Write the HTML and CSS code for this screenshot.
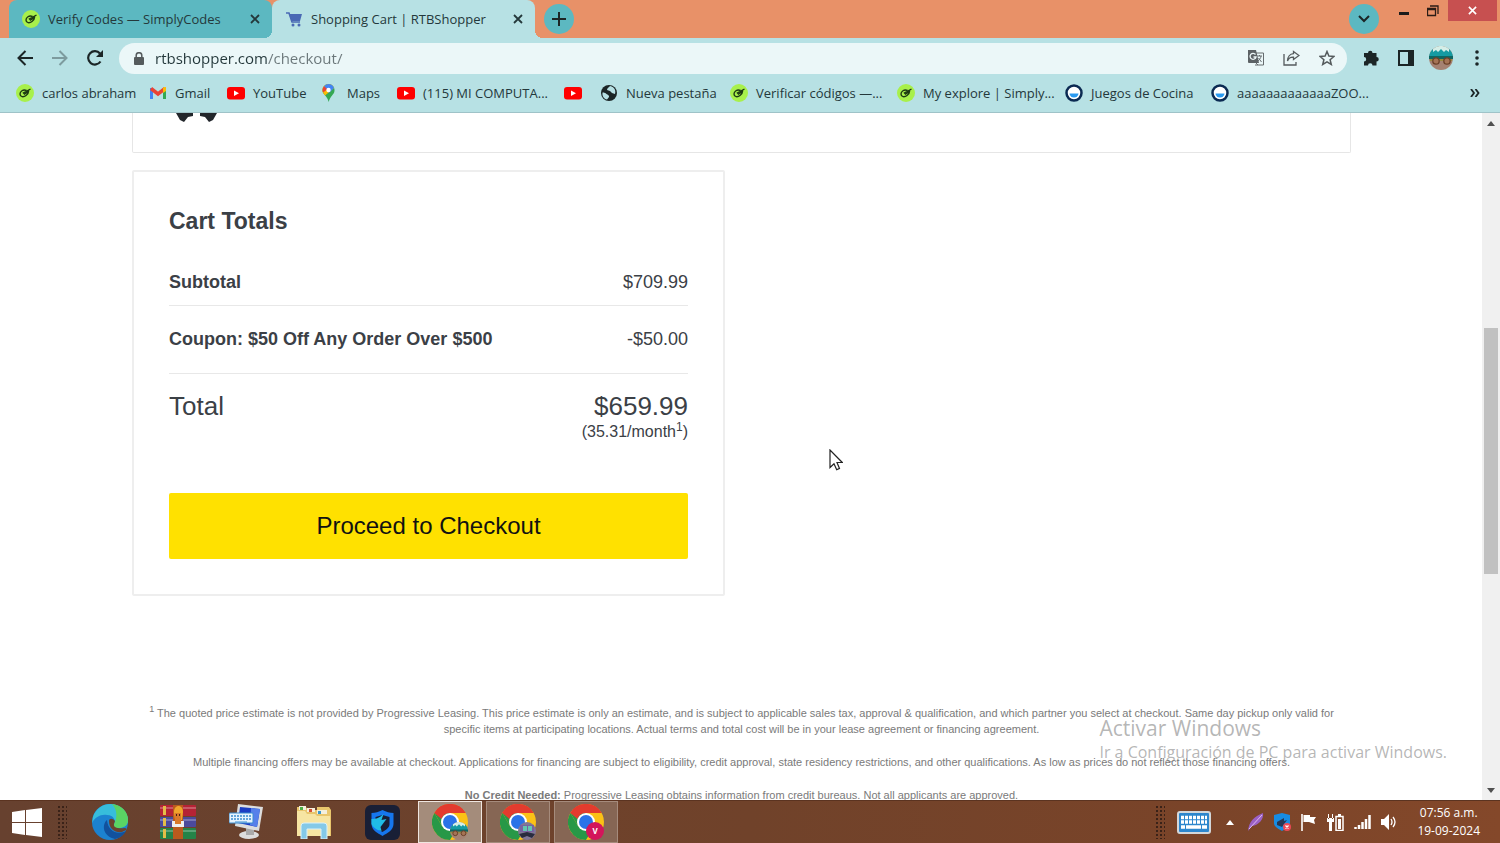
FILE: index.html
```
<!DOCTYPE html>
<html lang="en">
<head>
    <meta charset="UTF-8">
    <meta name="viewport" content="width=device-width, initial-scale=1.0">
    <title>Shopping Cart | RTBShopper</title>
    <link rel="stylesheet" href="styles.css">
</head>
<body>
    <!-- Shared icons -->
    <svg class="sprite" aria-hidden="true">
        <symbol id="simply" viewBox="0 0 18 18">
            <circle cx="9" cy="9" r="9" fill="#a8f04b"/>
            <path d="M10.500 6.500C7 5 4 7.500 4 10c0 3 3.500 3.500 6 1.500 2-1.500 2.500-3 2.500-4L8.500 10 7.500 9l7-4" fill="none" stroke="#1d3a12" stroke-width="1.400"/>
        </symbol>
        <symbol id="youtube" viewBox="0 0 18 18">
            <rect y="3" width="18" height="12.500" rx="3" fill="#f00"/>
            <path d="M7 6.500v5.500l5-2.750z" fill="#fff"/>
        </symbol>
        <symbol id="ball" viewBox="0 0 18 18">
            <circle cx="9" cy="9" r="7.500" fill="#fff" stroke="#0b2a52" stroke-width="2.500"/>
            <path d="M4.500 9.500h9a4.500 4 0 0 1-9 0z" fill="#2a9af0"/>
        </symbol>
        <symbol id="close" viewBox="0 0 10 10">
            <path d="M1 1l8 8M9 1L1 9" stroke="currentColor" stroke-width="1.800"/>
        </symbol>
        <symbol id="chrome" viewBox="0 0 36 36">
            <circle cx="18" cy="18" r="18" fill="#fbc116"/>
            <path d="M18 18L2.400 9A18 18 0 0 1 33.600 9H18z" fill="#e33b2e"/>
            <path d="M2.400 9A18 18 0 0 0 18 36l8-13.500-8-4.500L10.200 22.500z" fill="#279847"/>
            <path d="M2.400 9L10.200 22.500 18 18V9z" fill="#279847"/>
            <path d="M2.400 9A18 18 0 0 1 33.600 9H18a9 9 0 0 0-8.500 6z" fill="#e33b2e"/>
            <circle cx="18" cy="18" r="9" fill="#fff"/>
            <circle cx="18" cy="18" r="7" fill="#2a73e8"/>
        </symbol>
        <symbol id="truck" viewBox="0 0 24 24">
            <circle cx="12" cy="12" r="12" fill="#a58272"/>
            <path d="M0 12A12 12 0 0 1 4 3h16a12 12 0 0 1 4 9z" fill="#159ba2"/>
            <path d="M4 3a12 12 0 0 1 16 0v3l-3-2-2 2-3-3-3 3-2-2-3 2z" fill="#d5eee8"/>
            <path d="M0 10h24v3H0z" fill="#0f6663"/>
            <path d="M1 13h22v2H1z" fill="#9a8a3d"/>
            <circle cx="7" cy="15" r="3.200" fill="#a57455" stroke="#6b4029" stroke-width="1.300"/>
            <circle cx="18" cy="15" r="3.200" fill="#a57455" stroke="#6b4029" stroke-width="1.300"/>
        </symbol>
    </svg>

    <header class="browser">
        <div class="tabstrip">
            <div class="tab">
                <svg class="favicon"><use href="#simply"/></svg>
                <span class="tab-title">Verify Codes — SimplyCodes</span>
                <button class="tab-close" aria-label="Close tab"><svg><use href="#close"/></svg></button>
            </div>
            <div class="tab active">
                <svg class="favicon" viewBox="0 0 18 18">
                    <path d="M1 3h3l3 9h8" fill="none" stroke="#4a69b4" stroke-width="1.600"/>
                    <path d="M4 4h13l-2 7H6.500z" fill="#4a69b4"/>
                    <circle cx="8" cy="15" r="1.500" fill="#4a69b4"/><circle cx="14" cy="15" r="1.500" fill="#4a69b4"/>
                </svg>
                <span class="tab-title">Shopping Cart | RTBShopper</span>
                <button class="tab-close" aria-label="Close tab"><svg><use href="#close"/></svg></button>
            </div>
            <button class="round-btn new-tab" aria-label="New tab">
                <svg width="14" height="14" viewBox="0 0 14 14"><path d="M7 0v14M0 7h14" stroke="#1b2526" stroke-width="2"/></svg>
            </button>
            <div class="window-controls">
                <button class="round-btn" aria-label="Search tabs">
                    <svg width="12" height="8" viewBox="0 0 12 8"><path d="M1 1l5 5 5-5" fill="none" stroke="#1b2526" stroke-width="2"/></svg>
                </button>
                <button class="win-btn minimize" aria-label="Minimize">
                    <svg width="10" height="3"><path d="M0 1.500h10" stroke="#1b1b1b" stroke-width="3"/></svg>
                </button>
                <button class="win-btn restore" aria-label="Restore">
                    <svg width="12" height="12" viewBox="0 0 12 12"><path d="M.5 3.500h8v7h-8zM3 1h8v8M.5 4.500h8" fill="none" stroke="#2b1d16" stroke-width="1.300"/></svg>
                </button>
                <button class="win-btn win-close" aria-label="Close window"><svg><use href="#close"/></svg></button>
            </div>
        </div>

        <div class="toolbar">
            <button class="nav-btn" aria-label="Back">
                <svg width="16" height="16" viewBox="0 0 16 16"><path d="M16 8H2M8.500 1L1.500 8l7 7" fill="none" stroke="#1b2526" stroke-width="2"/></svg>
            </button>
            <button class="nav-btn" aria-label="Forward">
                <svg width="16" height="16" viewBox="0 0 16 16"><path d="M0 8h14M7.500 1l7 7-7 7" fill="none" stroke="#7d9b9e" stroke-width="2"/></svg>
            </button>
            <button class="nav-btn" aria-label="Reload">
                <svg width="16" height="16" viewBox="0 0 16 16"><path d="M13.500 11.500A6.700 6.700 0 1 1 13 3.500" fill="none" stroke="#1b2526" stroke-width="2.200"/><path d="M16 0v7H9z" fill="#1b2526"/></svg>
            </button>
            <div class="address">
                <svg width="10" height="13" viewBox="0 0 10 13"><rect y="5" width="10" height="8" rx="1" fill="#555b5d"/><path d="M2.200 6V3.500a2.800 2.800 0 0 1 5.600 0V6" fill="none" stroke="#555b5d" stroke-width="1.500"/></svg>
                <input type="text" class="url" aria-label="Address" value="rtbshopper.com/checkout/">
                <button aria-label="Translate">
                    <svg width="16" height="16" viewBox="0 0 16 16"><path d="M6 3h9.500v12H7" fill="none" stroke="#666c6f" /><path d="M0 0h8l3 13H1a1 1 0 0 1-1-1z" fill="#5c6265"/><path d="M7.500 4.500A3 3 0 1 0 8 7H5.500" fill="none" stroke="#eef8f9" stroke-width="1.300"/><path d="M9 6h5M11.500 5v1M13 6c0 2-2 4-3 5M10.500 8l3 4M8 13l2 2" fill="none" stroke="#666c6f"/></svg>
                </button>
                <button aria-label="Share">
                    <svg width="17" height="16" viewBox="0 0 17 16"><path d="M1 4v11h12v-3" fill="none" stroke="#555b5d" stroke-width="1.300"/><path d="M10.500 1.500l5.500 4-5.500 4V7.200C7.500 7 5.500 8.500 4.500 11c0-4 2.500-7 6-7.300z" fill="none" stroke="#555b5d" stroke-width="1.300"/></svg>
                </button>
                <button aria-label="Bookmark">
                    <svg width="16" height="16" viewBox="0 0 16 16"><path d="M8 1.500l1.900 4.600 5 .4-3.800 3.200 1.200 4.800L8 11.900l-4.300 2.600 1.200-4.800L1.100 6.500l5-.4z" fill="none" stroke="#555b5d" stroke-width="1.500"/></svg>
                </button>
            </div>
            <div class="tools">
                <button aria-label="Extensions">
                    <svg width="16" height="16" viewBox="0 0 16 16"><path d="M1 3h4a2 2 0 0 1 4.500 0h4v4a2.200 2.200 0 0 1 0 4.500v4h-4a2.200 2.200 0 0 0-4.500 0H1v-4a2.200 2.200 0 0 0 0-4.400z" fill="#1b2526"/></svg>
                </button>
                <button aria-label="Side panel">
                    <svg width="16" height="16" viewBox="0 0 16 16"><path d="M0 0h16v16H0zM2 2v12h8V2z" fill="#1b2526" fill-rule="evenodd"/></svg>
                </button>
                <button aria-label="Profile"><svg width="24" height="24"><use href="#truck"/></svg></button>
                <button aria-label="Menu">
                    <svg width="4" height="16" viewBox="0 0 4 16"><circle cx="2" cy="2" r="1.800" fill="#1b2526"/><circle cx="2" cy="8" r="1.800" fill="#1b2526"/><circle cx="2" cy="14" r="1.800" fill="#1b2526"/></svg>
                </button>
            </div>
        </div>

        <nav class="bookmarks">
            <a href="#"><svg class="favicon"><use href="#simply"/></svg>carlos abraham</a>
            <a href="#">
                <svg class="favicon" viewBox="0 0 18 18"><path d="M2.500 15V4" stroke="#4285f4" stroke-width="3"/><path d="M15.500 15V4" stroke="#34a853" stroke-width="3"/><path d="M2 4.500l7 5.500 7-5.500" fill="none" stroke="#ea4335" stroke-width="3.500"/><path d="M14 3.500l3-.5v4l-3 2z" fill="#fbbc04"/></svg>Gmail
            </a>
            <a href="#"><svg class="favicon"><use href="#youtube"/></svg>YouTube</a>
            <a href="#">
                <svg class="favicon" viewBox="0 0 18 18"><path d="M7.500 0A6 6 0 0 1 13.500 6.500C13.500 10.500 9 12 7.700 18 6.500 12 1.500 10.500 1.500 6.500A6 6 0 0 1 7.500 0z" fill="#34a853"/><path d="M7.500 0A6 6 0 0 1 13 4L4 11.500C2.500 9.500 1.500 8 1.500 6.500A6 6 0 0 1 7.500 0z" fill="#fbbc04"/><path d="M7.500 0A6 6 0 0 1 13 4L8 9 3 2.200A6 6 0 0 1 7.500 0z" fill="#4285f4"/><path d="M3 2.200l3.500 3L2 8.500C1.200 6 1.500 4 3 2.200z" fill="#ea4335"/><circle cx="7.500" cy="6" r="2.200" fill="#fff"/></svg>Maps
            </a>
            <a href="#"><svg class="favicon"><use href="#youtube"/></svg>(115) MI COMPUTA...</a>
            <a href="#" aria-label="YouTube"><svg class="favicon"><use href="#youtube"/></svg></a>
            <a href="#">
                <svg class="favicon" viewBox="0 0 18 18"><circle cx="9" cy="9" r="8" fill="#1b2526"/><path d="M2.500 8.500c2 0 3 .5 4 1.500s3 1 2.500 3l-2 2.500C4 15 2 12.500 2.500 8.500zM10 2c-1 1.500-3 2-3 4l3 1 2 2 3 1c1-3 0-7-5-8z" fill="#b7e1e4"/></svg>Nueva pestaña
            </a>
            <a href="#"><svg class="favicon"><use href="#simply"/></svg>Verificar códigos —...</a>
            <a href="#"><svg class="favicon"><use href="#simply"/></svg>My explore | Simply...</a>
            <a href="#"><svg class="favicon"><use href="#ball"/></svg>Juegos de Cocina</a>
            <a href="#"><svg class="favicon"><use href="#ball"/></svg>aaaaaaaaaaaaaZOO...</a>
            <button class="more" aria-label="More bookmarks">
                <svg width="10" height="8" viewBox="0 0 10 8"><path d="M1 0l3 4-3 4M5.500 0l3 4-3 4" fill="none" stroke="#1b2526" stroke-width="1.800"/></svg>
            </button>
        </nav>
    </header>

    <div class="viewport">
        <main class="page">
            <section class="cart-items">
                <svg width="44" height="10" viewBox="0 0 44 10"><path d="M1 0h17v3l-5 1-4 5-4-2zM42 0H25v3l5 1 4 5 4-2z" fill="#22262b"/></svg>
            </section>

            <section class="cart-totals">
                <h2>Cart Totals</h2>
                <table>
                    <tr class="subtotal">
                        <th>Subtotal</th>
                        <td>$709.99</td>
                    </tr>
                    <tr class="coupon">
                        <th><strong>Coupon:</strong> $50 Off Any Order Over $500</th>
                        <td>-$50.00</td>
                    </tr>
                    <tr class="total">
                        <th>Total</th>
                        <td>$659.99<small>(35.31/month<sup>1</sup>)</small></td>
                    </tr>
                </table>
                <button class="checkout">Proceed to Checkout</button>
            </section>

            <footer class="legal">
                <p><sup>1</sup> The quoted price estimate is not provided by Progressive Leasing. This price estimate is only an estimate, and is subject to applicable sales tax, approval &amp; qualification, and which partner you select at checkout. Same day pickup only valid for specific items at participating locations. Actual terms and total cost will be in your lease agreement or financing agreement.</p>
                <p>Multiple financing offers may be available at checkout. Applications for financing are subject to eligibility, credit approval, state residency restrictions, and other qualifications. As low as prices do not reflect those financing offers.</p>
                <p><b>No Credit Needed:</b> Progressive Leasing obtains information from credit bureaus. Not all applicants are approved.</p>
            </footer>
        </main>

        <div class="scrollbar">
            <svg width="8" height="5"><path d="M0 5l4-5 4 5z" fill="#505050"/></svg>
            <div class="thumb"></div>
            <svg width="8" height="5"><path d="M0 0h8L4 5z" fill="#505050"/></svg>
        </div>

        <div class="watermark">
            <div class="watermark-title">Activar Windows</div>
            <div>Ir a Configuración de PC para activar Windows.</div>
        </div>
        <svg class="cursor" width="14" height="22" viewBox="0 0 14 22"><path d="M1 1v17.500l4-3.800 2.700 6 2.800-1.300L8 13.500h5.300z" fill="#fff" stroke="#222" stroke-width="1.200"/></svg>
    </div>

    <footer class="taskbar">
        <button class="start" aria-label="Start">
            <svg width="30" height="29" viewBox="0 0 30 29"><path d="M0 4l13-2v12H0zM14 2l16-2v14H14zM0 15h13v12L0 25zM14 15h16v14l-16-2z" fill="#fff"/></svg>
        </button>
        <span class="grip"></span>
        <div class="apps">
            <button aria-label="Edge">
                <svg width="36" height="36" viewBox="0 0 36 36"><circle cx="18" cy="18" r="18" fill="#1c82d0"/><path d="M1 13C4 4 11 0 18 0c11 0 18 8 18 16 0 6-5 8-10 8-4 0-5-2-4-4 2-3 0-9-7-9C9 10 3 13 0 19z" fill="#37bddb"/><path d="M20 0c10 1 16 8 16 16 0 6-5 8-10 8-4 0-5-2-4-4 3-5 4-14-2-20z" fill="#5ad364"/><path d="M15 16c-5 4-5 16 8 19 5-1 9-4 11-8-8 4-18 1-19-11z" fill="#12519d"/><path d="M17 17c0 8 6 12 13 11l4-2c1-1 0-2-1-2-6 1-12 0-11-4l1-3c-2-3-6-3-6 0z" fill="#6b422d"/></svg>
            </button>
            <button aria-label="WinRAR">
                <svg width="36" height="34" viewBox="0 0 36 34"><rect width="36" height="11" rx="1" fill="#b52335"/><rect y="12" width="36" height="10" rx="1" fill="#4b4a9c"/><rect y="23" width="36" height="11" rx="1" fill="#258348"/><path d="M0 3h36M0 15h36M0 26h36" stroke="#fff" stroke-opacity=".25" stroke-width="2"/><path d="M4.500 1v9M4.500 13v8M4.500 24v9" stroke="#e4bd48" stroke-width="3"/><path d="M13 0h10v34H13z" fill="#ba5a1e"/><path d="M14 7c0-8 9-8 9 0l-1 8h-7z" fill="#f0a52c"/><path d="M12 16h12v6H12z" fill="#eee"/><path d="M15 8h6v11h-6z" fill="#d9792a"/><path d="M16 10h1M19 10h1" stroke="#4b2413" stroke-width="2"/></svg>
            </button>
            <button aria-label="Remote keyboard">
                <svg width="34" height="36" viewBox="0 0 34 36"><ellipse cx="20" cy="31" rx="10" ry="4" fill="#ddd"/><path d="M17 24h8v7h-8z" fill="#aaa"/><path d="M9 0l25 3-4 24L6 22z" fill="#ddd"/><path d="M11 3l20 2-3 18L9 19z" fill="#1b3dc4"/><path d="M22 4l9 1-3 18-7-2z" fill="#5780ea"/><rect y="9" width="24" height="10" rx="1" fill="#e6f3fd" stroke="#3a8ccf"/><path d="M2 12h20M2 15h20" stroke="#3a8ccf" stroke-width="1.500" stroke-dasharray="2 1"/><path d="M6 18h12" stroke="#3a8ccf"/></svg>
            </button>
            <button aria-label="File Explorer">
                <svg width="36" height="34" viewBox="0 0 36 34"><path d="M1 2h9l2 3h9V2h12l2 3v26H1z" fill="#e9c66c"/><path d="M3 1h7v4H3z" fill="#f4efdc"/><path d="M4 2h3v3H4z" fill="#4daf46"/><path d="M11 3h8v4h-8z" fill="#f4efdc"/><path d="M13 4h3v3h-3z" fill="#d65335"/><path d="M21 5h10v4H21z" fill="#f4efdc"/><path d="M22 6h3v3h-3z" fill="#3b98cb"/><path d="M1 6h8l2 3h8l2 2h13v20H1z" fill="#f7e5a2"/><path d="M5 34V21q0-3 3-3h20q3 0 3 3v13h-6V24H11v10z" fill="#84c9e8" stroke="#d8f1fb"/></svg>
            </button>
            <button aria-label="Antivirus">
                <svg width="35" height="35" viewBox="0 0 35 35"><rect width="35" height="35" rx="6" fill="#191f36"/><path d="M17.500 5c4 2 7 3 11 3v11c0 6-6 9-11 12-5-3-11-6-11-12V8c4 0 7-1 11-3z" fill="#1676ee"/><path d="M17.500 10l7 2v7c0 4-4 6-7 8-3-2-7-4-7-8v-7z" fill="#191f36"/><path d="M6.500 14c5 0 8-1 12-5l-2 6 5-1-6 8 1 4c-5-1-9-4-10-7z" fill="#20bde6"/></svg>
            </button>
            <button class="window current" aria-label="Chrome">
                <svg width="36" height="36" viewBox="0 0 36 36"><use href="#chrome"/><use href="#truck" x="18" y="18" width="18" height="18"/></svg>
            </button>
            <button class="window" aria-label="Chrome, second profile">
                <svg width="36" height="36" viewBox="0 0 36 36"><use href="#chrome"/><circle cx="27" cy="27" r="9" fill="#817795"/><path d="M20 21h14v7H20z" fill="#7962a0"/><path d="M23 22h4v5h-4zM28 22h4v5h-4z" fill="#64c6b1"/><path d="M19 30l8-2 8 2-3 4-5-2-5 2z" fill="#292b3e"/></svg>
            </button>
            <button class="window" aria-label="Chrome, third profile">
                <svg width="36" height="36" viewBox="0 0 36 36"><use href="#chrome"/><circle cx="27" cy="27" r="9" fill="#d3155b"/><text x="27" y="30" text-anchor="middle" class="initial">V</text></svg>
            </button>
        </div>

        <div class="tray">
            <span class="grip"></span>
            <button aria-label="Touch keyboard">
                <svg width="34" height="23" viewBox="0 0 34 23"><rect x="1" y="1" width="32" height="21" rx="2" fill="#2d86cc" stroke="#d3d7da" stroke-width="2"/><path d="M4 6.500h26M4 11h26" stroke="#fff" stroke-width="3.500" stroke-dasharray="3 1"/><path d="M4 16h4M9 16h15M25 16h5" stroke="#fff" stroke-width="3.500"/></svg>
            </button>
            <button aria-label="Show hidden icons"><svg width="8" height="5"><path d="M0 5l4-5 4 5z" fill="#fff"/></svg></button>
            <button aria-label="Feather"><svg width="16" height="18" viewBox="0 0 16 18"><path d="M0 18C1 8 6 4 15 0c1 6-4 12-11 13z" fill="#9b60c5"/><path d="M1 16L14 2" stroke="#dfbdf0"/></svg></button>
            <button aria-label="Security"><svg width="17" height="18" viewBox="0 0 17 18"><path d="M8 0l8 2v8c0 4-5 6-8 8-3-2-8-4-8-8V2z" fill="#178ce3"/><path d="M3 9l7-4v3l3-1-5 7-5-2z" fill="#253856"/><circle cx="13" cy="14" r="4" fill="#ed4956"/><path d="M11.500 12.500l3 3M14.500 12.500l-3 3" stroke="#fff" stroke-width="1.200"/></svg></button>
            <button aria-label="Action center"><svg width="16" height="17" viewBox="0 0 16 17"><path d="M1 0v17" stroke="#fff" stroke-width="1.600"/><path d="M2.500 1H9v2h6l-2 3 1 4-6-2H2.500z" fill="#fff"/></svg></button>
            <button aria-label="Battery"><svg width="17" height="17" viewBox="0 0 17 17"><rect x="9" y="2.500" width="7" height="14" fill="none" stroke="#fff" stroke-width="1.500"/><path d="M11 0h3v2h-3zM11 5h3v10h-3z" fill="#fff"/><path d="M1 0v5h1V0zM5 0v5h1V0zM0 4h7v4H5v9H2V8H0z" fill="#fff"/></svg></button>
            <button aria-label="Network"><svg width="17" height="14" viewBox="0 0 17 14"><path d="M1.500 14v-2M5 14v-4M8.500 14V7M12 14V4M15.500 14V0" stroke="#fff" stroke-width="2.500"/></svg></button>
            <button aria-label="Volume"><svg width="16" height="16" viewBox="0 0 16 16"><path d="M0 5h3l5-5v16l-5-5H0z" fill="#fff"/><path d="M10 5q2 3 0 6M12 3q4 5 0 10" fill="none" stroke="#fff" stroke-width="1.300"/></svg></button>
            <div class="clock">
                <div>07:56 a.m.</div>
                <div>19-09-2024</div>
            </div>
        </div>
    </footer>
</body>
</html>
```
FILE: styles.css
```
* {
    box-sizing: border-box;
}

body {
    margin: 0;
    height: 100vh;
    display: flex;
    flex-direction: column;
    overflow: hidden;
    font-family: "Open Sans", "Noto Sans", sans-serif;
    font-size: 13px;
    color: #24383b;
    background: #fff;
}

button {
    display: flex;
    align-items: center;
    justify-content: center;
    padding: 0;
    border: none;
    background: none;
    font: inherit;
    color: inherit;
    cursor: pointer;
}

.sprite {
    display: none;
}

.favicon {
    width: 18px;
    height: 18px;
    flex: none;
}

/* Browser chrome */
.browser {
    flex: none;
    background: #b7e1e4;
    border-bottom: 1px solid #9fc3c8;
}

.tabstrip {
    display: flex;
    height: 38px;
    padding-left: 9px;
    background: #e89168;
}

.tab {
    display: flex;
    align-items: center;
    width: 263px;
    padding: 0 11px 0 13px;
    background: #5cb8c1;
    border-radius: 8px 8px 0 0;
}

.tab.active {
    position: relative;
    background: #b7e1e4;
}

.tab.active::before,
.tab.active::after {
    content: "";
    position: absolute;
    bottom: 0;
    width: 8px;
    height: 8px;
}

.tab.active::before {
    right: 100%;
    background: radial-gradient(circle at 0 0, transparent 8px, #b7e1e4 8px);
}

.tab.active::after {
    left: 100%;
    background: radial-gradient(circle at 100% 0, transparent 8px, #b7e1e4 8px);
}

.tab-title {
    flex: 1;
    margin-left: 8px;
    white-space: nowrap;
}

.tab-close {
    width: 12px;
    height: 20px;
}

.tab-close svg {
    width: 10px;
    height: 10px;
}

.round-btn {
    width: 30px;
    height: 30px;
    border-radius: 50%;
    background: #5cb8c1;
}

.new-tab {
    margin: 4px 0 0 9px;
}

.window-controls {
    display: flex;
    align-items: flex-start;
    margin-left: auto;
    padding-right: 3px;
}

.window-controls .round-btn {
    margin: 4px 10px 0 0;
}

.win-btn {
    width: 29px;
    height: 21px;
}

.minimize {
    align-items: flex-end;
    padding-bottom: 6px;
}

.restore {
    margin-right: 1px;
}

.win-close {
    width: 49px;
    background: #c75050;
    color: #fff;
}

.win-close svg {
    width: 9px;
    height: 9px;
}

.toolbar {
    display: flex;
    align-items: center;
    height: 40px;
    padding: 0 21px 0 17px;
}

.nav-btn {
    width: 16px;
    height: 30px;
    margin-right: 19px;
}

.address {
    flex: 1;
    display: flex;
    align-items: center;
    gap: 19px;
    height: 31px;
    margin-left: -3px;
    padding: 0 12px 0 15px;
    border-radius: 16px;
    background: #ebf7f8;
}

/* host in dark, path in grey */
.url {
    flex: 1;
    margin-left: -8px;
    padding: 0;
    border: none;
    outline: none;
    font: inherit;
    font-size: 15px;
    color: transparent;
    background: linear-gradient(to right, #24383b 113px, #6b777a 113px);
    -webkit-background-clip: text;
    background-clip: text;
}

.tools {
    display: flex;
    align-items: center;
    gap: 19px;
    margin-left: 16px;
}

.tools button:nth-child(3) {
    margin: 0 3px 0 -4px;
}

.bookmarks {
    display: grid;
    grid-template-columns: 133px 78px 94px 76px 167px 36px 130px 167px 168px 146px 152px 1fr;
    align-items: center;
    height: 34px;
    padding: 0 20px 4px 16px;
}

.bookmarks a {
    display: flex;
    align-items: center;
    gap: 8px;
    color: inherit;
    text-decoration: none;
    white-space: nowrap;
}

.more {
    justify-self: end;
}

/* Page */
.viewport {
    position: relative;
    flex: 1;
    min-height: 0;
    display: flex;
    overflow: hidden;
    font-family: "Liberation Sans", Arial, sans-serif;
    color: #3b4046;
}

.page {
    flex: 1;
    padding: 0 131px 0 132px;
    overflow: hidden;
}

.cart-items {
    height: 40px;
    padding-left: 42px;
    border: 1px solid #e6e6e6;
    border-top: none;
    border-radius: 0 0 2px 2px;
}

.cart-items svg {
    display: block;
}

.cart-totals {
    width: 593px;
    max-width: 100%;
    margin-top: 17px;
    padding: 35px;
    border: 2px solid #eee;
    border-radius: 2px;
}

.cart-totals h2 {
    margin: 0 0 35px;
    font-size: 23px;
    line-height: 28px;
}

.cart-totals table {
    width: 100%;
    border-collapse: collapse;
    font-size: 18px;
    line-height: 24px;
}

.cart-totals th {
    padding: 0;
    text-align: left;
}

.cart-totals td {
    padding: 0;
    text-align: right;
}

.subtotal th,
.subtotal td {
    padding-bottom: 11px;
    border-bottom: 1px solid #e8e8e8;
}

.coupon th,
.coupon td {
    padding: 21px 0 22px;
    border-bottom: 1px solid #e8e8e8;
}

.total th,
.total td {
    padding-top: 17px;
    font-size: 26px;
    font-weight: normal;
    line-height: 30px;
    vertical-align: top;
}

.total small {
    display: block;
    font-size: 16px;
    line-height: 22px;
}

.total sup {
    font-size: 12px;
    line-height: 0;
}

.checkout {
    width: 100%;
    height: 66px;
    margin-top: 50px;
    border-radius: 2px;
    background: #ffe100;
    color: #111;
    font-size: 24px;
}

.legal {
    padding: 109px 16px 0;
    font-size: 11px;
    line-height: 16px;
    text-align: center;
    color: #7a7a7a;
}

.legal p {
    margin: 0 0 17px;
}

.legal sup {
    font-size: 9px;
    line-height: 0;
}

.scrollbar {
    display: grid;
    grid-template-rows: 20px 195fr 246fr 206fr 20px;
    justify-items: center;
    align-items: center;
    width: 18px;
    background: #f0f0f0;
}

.scrollbar svg:last-child {
    grid-row: 5;
}

.thumb {
    grid-row: 3;
    align-self: stretch;
    width: 14px;
    background: #c1c1c1;
}

.watermark {
    position: absolute;
    right: 53px;
    bottom: 36px;
    font-family: "Open Sans", "Noto Sans", sans-serif;
    font-size: 16px;
    line-height: 24px;
    color: rgba(120, 120, 120, 0.55);
}

.watermark-title {
    font-size: 21px;
}

.cursor {
    position: absolute;
    left: 829px;
    top: 336px;
}

/* Taskbar */
.taskbar {
    flex: none;
    display: flex;
    align-items: center;
    height: 43px;
    padding: 0 20px 0 12px;
    border-top: 1px solid #5b3320;
    background: linear-gradient(to right, #67412f, #70422a 50%, #7a4429 80%, #84482a);
    color: #fff;
}

.grip {
    width: 10px;
    height: 34px;
    background: radial-gradient(circle at 2px 2px, #3a2218 1px, transparent 1px) 0 0 / 4px 4px;
}

.start + .grip {
    margin-left: 15px;
}

.apps {
    display: flex;
    gap: 4px;
    margin-left: 11px;
}

.apps button {
    width: 64px;
    height: 42px;
}

.apps .window {
    border: 1px solid #a58b7c;
    background: #866654;
}

.apps .current {
    border-color: #efe6e0;
    background: #a48c7b;
}

.initial {
    font-size: 8px;
    font-weight: bold;
    fill: #fff;
}

.tray {
    display: flex;
    align-items: center;
    gap: 10px;
    margin-left: auto;
}

.tray button:first-of-type {
    margin: 0 5px 0 2px;
}

.tray button:nth-of-type(2) {
    margin-right: 4px;
}

.clock {
    margin-left: 10px;
    font-size: 12px;
    line-height: 18px;
    text-align: center;
}
```
